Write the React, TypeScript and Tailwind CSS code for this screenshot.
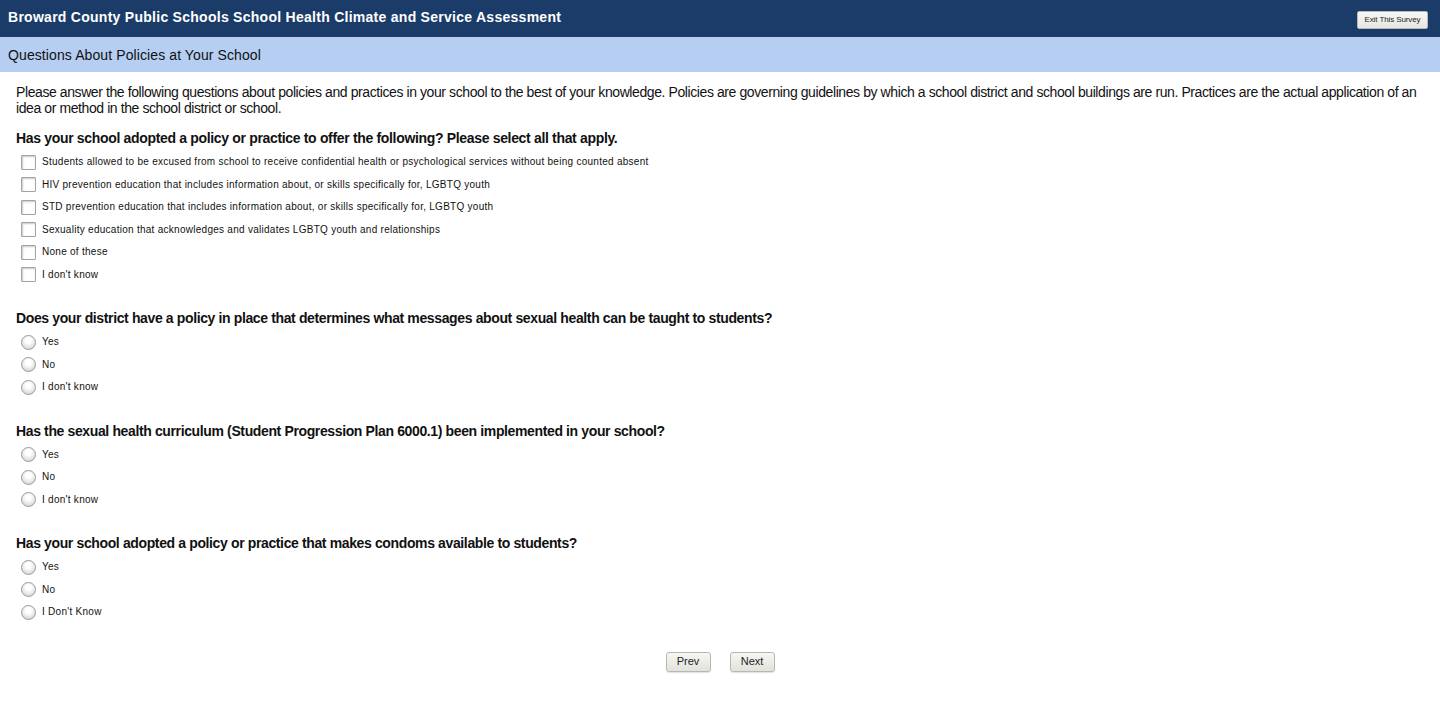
import React from "react";

const checkOptions = [
  "Students allowed to be excused from school to receive confidential health or psychological services without being counted absent",
  "HIV prevention education that includes information about, or skills specifically for, LGBTQ youth",
  "STD prevention education that includes information about, or skills specifically for, LGBTQ youth",
  "Sexuality education that acknowledges and validates LGBTQ youth and relationships",
  "None of these",
  "I don't know",
];

const radioQuestions = [
  {
    q: "Does your district have a policy in place that determines what messages about sexual health can be taught to students?",
    opts: ["Yes", "No", "I don't know"],
  },
  {
    q: "Has the sexual health curriculum (Student Progression Plan 6000.1) been implemented in your school?",
    opts: ["Yes", "No", "I don't know"],
  },
  {
    q: "Has your school adopted a policy or practice that makes condoms available to students?",
    opts: ["Yes", "No", "I Don't Know"],
  },
];

function Checkbox() {
  return (
    <span className="block w-[15px] h-[15px] border border-[#a3a3a3] bg-white shadow-[inset_1px_1px_2px_#c8c8c8] rounded-[1px]" />
  );
}

function Radio() {
  return (
    <span className="block w-[15px] h-[15px] rounded-full border border-[#9a9a9a] bg-[radial-gradient(circle_at_50%_35%,#ffffff_25%,#e6e6e6_60%,#c9c9c9_100%)]" />
  );
}

function OptionRow({ label, kind }: { label: string; kind: "check" | "radio" }) {
  return (
    <div className="flex items-center h-[22.5px] pl-[5px]">
      <span className="w-[21px] flex items-center">{kind === "check" ? <Checkbox /> : <Radio />}</span>
      <span className="text-[10px] leading-[12px] text-[#111] tracking-[0.27px]">{label}</span>
    </div>
  );
}

export default function App() {
  return (
    <div className="w-[1440px] h-[709px] bg-white font-['Liberation_Sans',Arial,sans-serif] text-black overflow-hidden">
      <div className="h-[37px] bg-[#1b3c69] flex items-center justify-between pl-[8px] pr-[12px]">
        <h1 className="text-white font-bold text-[14px] leading-[18px] -mt-[3px] tracking-[0.27px]">
          Broward County Public Schools School Health Climate and Service Assessment
        </h1>
        <button className="mt-[3px] w-[71px] h-[18px] rounded-[2px] border border-[#b8b8b8] bg-[linear-gradient(#f7f7f5,#e6e6e2)] text-[8px] text-[#222] tracking-[-0.1px]">
          Exit This Survey
        </button>
      </div>
      <div className="h-[35px] bg-[#b5cef1] flex items-center pl-[8px]">
        <h2 className="text-[14px] leading-[18px] text-[#111] tracking-[0.1px]">Questions About Policies at Your School</h2>
      </div>

      <div className="pl-[16px] pr-[16px] pt-[12px]">
        <p className="text-[14px] leading-[16px] text-[#111] tracking-[-0.41px]">
          Please answer the following questions about policies and practices in your school to the best of your knowledge. Policies are governing guidelines by which a school district and school buildings are run. Practices are the actual application of an idea or method in the school district or school.
        </p>

        <div className="mt-[12px]">
          <h3 className="font-bold text-[14px] leading-[20px] text-[#111] mb-[3px] tracking-[-0.33px]">
            Has your school adopted a policy or practice to offer the following? Please select all that apply.
          </h3>
          {checkOptions.map((o) => (
            <OptionRow key={o} label={o} kind="check" />
          ))}
        </div>

        {radioQuestions.map((rq) => (
          <div key={rq.q} className="mt-[22px]">
            <h3 className="font-bold text-[14px] leading-[20px] text-[#111] mb-[3px] tracking-[-0.37px]">{rq.q}</h3>
            {rq.opts.map((o) => (
              <OptionRow key={o} label={o} kind="radio" />
            ))}
          </div>
        ))}

        <div className="mt-[28px] flex justify-center gap-[19px]">
          <button className="w-[45px] h-[20px] rounded-[3px] border border-[#b8b8b2] bg-[linear-gradient(#f6f6f3,#e2e2dc)] shadow-[0_1px_1px_rgba(0,0,0,0.12)] text-[11px] text-[#222]">
            Prev
          </button>
          <button className="w-[45px] h-[20px] rounded-[3px] border border-[#b8b8b2] bg-[linear-gradient(#f6f6f3,#e2e2dc)] shadow-[0_1px_1px_rgba(0,0,0,0.12)] text-[11px] text-[#222]">
            Next
          </button>
        </div>
      </div>
    </div>
  );
}
